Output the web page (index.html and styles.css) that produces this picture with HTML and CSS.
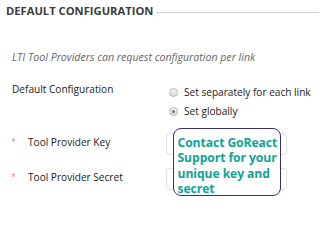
FILE: index.html
```html
<!DOCTYPE html>
<html>
<head>
<meta charset="utf-8">
<link rel="stylesheet" href="styles.css">
</head>
<body>
<div class="panel">
  <div class="header">
    <h2 class="title">DEFAULT CONFIGURATION</h2>
    <div class="rule"></div>
  </div>
  <p class="note">LTI Tool Providers can request configuration per link</p>
  <div class="field field-radio">
    <div class="label">Default Configuration</div>
    <div class="control radios">
      <label class="radio"><span class="dot"></span>Set separately for each link</label>
      <label class="radio"><span class="dot checked"></span>Set globally</label>
    </div>
  </div>
  <div class="field field-input">
    <div class="label"><span class="req">*</span>Tool Provider Key</div>
    <div class="control"><div class="input"></div></div>
  </div>
  <div class="field field-input second">
    <div class="label"><span class="req">*</span>Tool Provider Secret</div>
    <div class="control"><div class="input"></div></div>
  </div>
  <div class="callout">Contact GoReact<br>Support for your<br>unique key and<br>secret</div>
</div>
</body>
</html>
```
FILE: styles.css
```css
html, body {
  margin: 0;
  padding: 0;
  background: #ffffff;
}
body {
  font-family: "Open Sans", "Liberation Sans", sans-serif;
  color: #222;
  width: 319px;
  height: 200px;
  overflow: hidden;
}
.panel {
  position: relative;
  height: 200px;
}
.header {
  display: flex;
  align-items: center;
  padding: 3px 0 0 6px;
  height: 15px;
}
.title {
  margin: 0;
  font-size: 11.2px;
  font-weight: 700;
  color: #3a3a3a;
  white-space: nowrap;
}
.rule {
  flex: 1;
  border-top: 1px solid #d0d0d0;
  margin-left: 3px;
  margin-top: 3px;
}
.note {
  margin: 32px 0 0 12px;
  font-size: 10.6px;
  font-style: italic;
  color: #666;
  line-height: 14px;
}
.field {
  display: grid;
  grid-template-columns: 166px 1fr;
  font-size: 10.1px;
}
.field-radio {
  margin-top: 18px;
}
.field-radio .label {
  padding-left: 12px;
  line-height: 14px;
}
.radios {
  display: flex;
  flex-direction: column;
  gap: 5px;
  padding-top: 3px;
}
.radio {
  display: flex;
  align-items: center;
  height: 14px;
  line-height: 14px;
  color: #222;
  padding-left: 3px;
}
.dot {
  width: 9px;
  height: 9px;
  box-sizing: border-box;
  border-radius: 50%;
  border: 1px solid #b9b9b9;
  background: linear-gradient(#f4f4f4, #d9d9d9);
  margin-right: 6px;
  position: relative;
}
.dot.checked::after {
  content: "";
  position: absolute;
  left: 2px;
  top: 2px;
  width: 3px;
  height: 3px;
  border-radius: 50%;
  background: #777;
}
.field-input {
  margin-top: 15px;
  align-items: start;
}
.field-input.second {
  margin-top: 13px;
}
.field-input .label {
  padding-left: 11px;
  padding-top: 1.5px;
  display: flex;
  align-items: center;
  line-height: 14px;
}
.req {
  color: #f08a6c;
  width: 17px;
  font-size: 9px;
}
.input {
  width: 121px;
  height: 22px;
  box-sizing: border-box;
  border: 1px solid #e0e0e0;
  border-radius: 4px;
  background: #fff;
}
.callout {
  position: absolute;
  left: 173px;
  top: 128px;
  width: 108px;
  height: 68px;
  box-sizing: border-box;
  border: 1.5px solid #3b2e6e;
  border-radius: 8px;
  background: #fff;
  padding: 5.5px 0 0 3.5px;
  color: #0ea39a;
  font-weight: 700;
  font-size: 12.2px;
  letter-spacing: -0.1px;
  line-height: 15.5px;
  white-space: nowrap;
}
```
